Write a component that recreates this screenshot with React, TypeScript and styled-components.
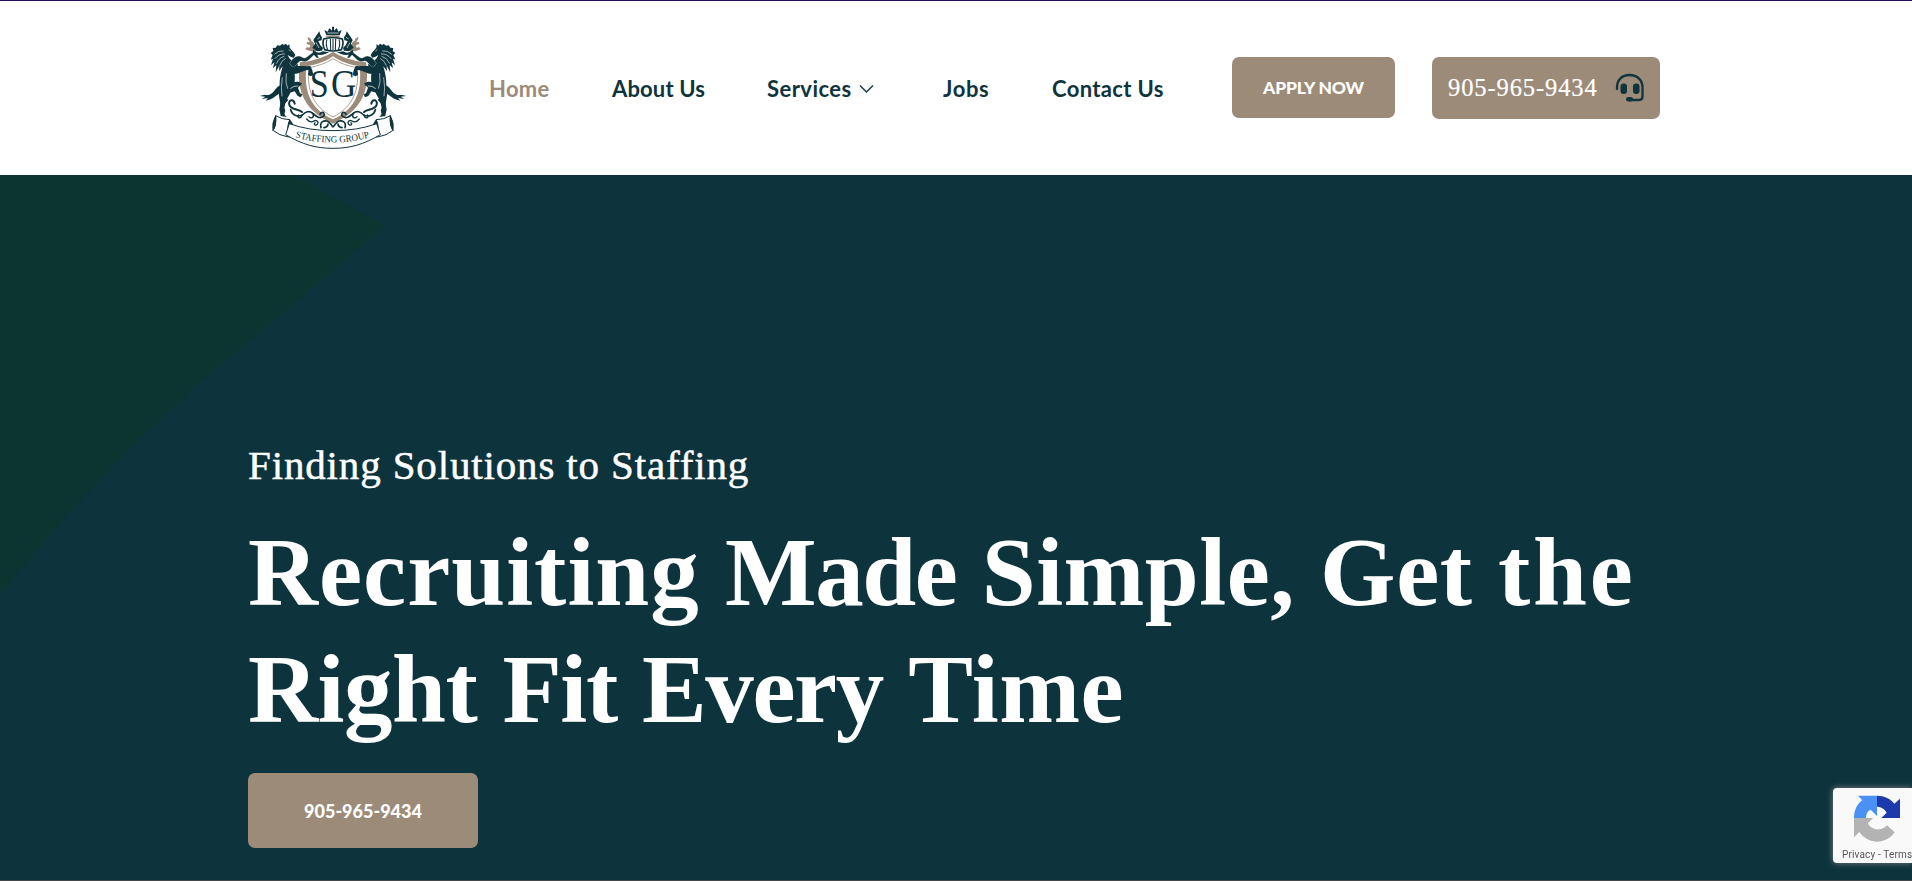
import React from "react";
import styled, { createGlobalStyle } from "styled-components";

const ink = "#0f343d";
const tan = "#9d8b79";
const serif = `"Liberation Serif", "Times New Roman", serif`;
const sans = `Lato, "Open Sans", sans-serif`;

const GlobalStyle = createGlobalStyle`
  * { box-sizing: border-box; }
  body { margin: 0; overflow: hidden; background: ${ink}; }
  a { color: inherit; text-decoration: none; }
`;

const Page = styled.div`
  display: flex;
  flex-direction: column;
  width: 100%;
  height: 881px;
  border-top: 1px solid #2b0d55;
  border-bottom: 1px solid #43474a;
  background: #0d333c;
  overflow: hidden;
`;

const Header = styled.header`
  display: flex;
  align-items: flex-start;
  flex: none;
  height: 174px;
  padding-left: 250px;
  background: #fff;
`;

const LogoLink = styled.a`
  display: block;
  width: 165px;
  height: 145px;
  margin: 14px 74px 0 0;
`;

const Nav = styled.nav`
  display: flex;
  width: 743px;
  padding-top: 72px;
`;

const NavItem = styled.a<{ $space: number; $spacing?: number; $active?: boolean }>`
  display: flex;
  align-items: center;
  gap: 7px;
  width: ${(p) => p.$space}px;
  height: 32px;
  color: ${(p) => (p.$active ? tan : ink)};
  font: 700 22px/32px ${sans};
  letter-spacing: ${(p) => p.$spacing ?? 0}px;
  white-space: nowrap;
`;

const Button = styled.a<{ $w: number; $h: number; $size: number; $spacing: number }>`
  display: flex;
  align-items: center;
  justify-content: center;
  width: ${(p) => p.$w}px;
  height: ${(p) => p.$h}px;
  border-radius: 7px;
  background: ${tan};
  color: #fff;
  font: 900 ${(p) => p.$size}px/1 ${sans};
  letter-spacing: ${(p) => p.$spacing}px;
  white-space: nowrap;
`;

const Actions = styled.div`
  display: flex;
  gap: 37px;
  padding-top: 56px;
`;

const PhoneButton = styled.a`
  display: flex;
  align-items: center;
  justify-content: space-between;
  width: 228px;
  height: 62px;
  padding: 0 15px 0 16px;
  border-radius: 7px;
  background: ${tan};
  color: #fff;
  font: 400 24.5px/1 ${serif};
  letter-spacing: 0.9px;
  -webkit-text-stroke: 0.2px #fff;
  white-space: nowrap;
`;

const Hero = styled.main`
  position: relative;
  flex: 1;
  padding: 260px 0 0 248px;
`;

const HeroShape = styled.svg`
  position: absolute;
  left: 0;
  top: 0;
`;

const HeroContent = styled.div`
  position: relative;
  color: #fff;
`;

const Tagline = styled.p`
  margin: 0 0 19px;
  font: 400 41px/60px ${serif};
  letter-spacing: 0.85px;
  -webkit-text-stroke: 0.5px #fff;
  white-space: nowrap;
`;

const Title = styled.h1`
  margin: 0 0 25px;
  font: 700 97px/117px ${serif};
  letter-spacing: 1px;
  white-space: nowrap;
`;

const TitleLine = styled.span`
  display: block;
`;

const Word = styled.span<{ $spacing: number }>`
  letter-spacing: ${(p) => p.$spacing}px;
`;

const Captcha = styled.aside`
  position: fixed;
  right: 0;
  bottom: 18px;
  display: flex;
  flex-direction: column;
  width: 79px;
  height: 75px;
  padding: 6px 0 0 9px;
  border-radius: 4px 0 0 4px;
  background: #f9f9f9;
  box-shadow: 0 0 6px #808080;
  color: #555;
  font: 400 10px/14px Roboto, sans-serif;
  white-space: nowrap;
  overflow: hidden;
  svg { margin-left: 10px; flex: none; }
`;

const CaptchaLinks = styled.div`
  margin-top: 4px;
  letter-spacing: 0.15px;
`;

/* Left half of the crest: supporter horse, scrollwork, ribbon end, crown flourish. */
function CrestHalf() {
  return (
    <g>
      {/* shield frame */}
      <path d="M249 110 C226 126 190 138 150 142 C138 222 158 285 249 326 L249 313 C177 281 162 225 169 154 C200 149 228 139 249 124Z" fill={tan} />
      <path d="M249 131 C226 146 204 153 177 158 C170 222 186 274 249 306" fill="none" stroke={tan} strokeWidth="2.5" />
      {/* head, neck and body */}
      <path d="M108 86 L113 92 L118 87 L119 98 L132 113 L136 121 L131 128 L123 126 L113 120 C119 136 132 141 145 149 L132 167 C137 186 135 211 126 220 L119 238 L113 248 L108 257 L102 275 L106 287 L103 298 L110 306 L92 303 L91 293 L95 278 L90 260 L86 236 L89 216 C88 188 94 169 98 154 L87 168 L88 152 L77 172 L79 150 L69 160 L73 142 L63 151 L69 131 L62 134 L68 120 L62 114 L70 108 L68 99 L77 98 L82 91 L90 92 L97 86 L101 90Z" fill={ink} />
      <g fill="none" stroke="#fff" strokeWidth="1.8">
        <path d="M73 118 Q86 105 101 108" />
        <path d="M74 132 Q87 115 105 117" />
        <path d="M79 146 Q88 127 103 124" />
        <path d="M89 152 Q94 137 107 130" />
        <path d="M109 175 Q105 204 113 221" />
        <path d="M97 187 Q92 219 96 244" />
        <path d="M116 104 L122 108" />
      </g>
      {/* forelegs */}
      <path d="M119 145 C130 126 143 119 155 126 C168 136 176 119 190 112 L201 116 L207 130 L199 128 L192 120 C180 130 172 144 157 139 C146 134 143 151 128 157Z" fill={ink} stroke="#fff" strokeWidth="1" />
      <path d="M124 158 C145 149 160 155 181 153 L187 166 L190 180 L181 184 L174 179 L176 165 C157 166 149 177 131 177Z" fill={ink} />
      {/* tail and hind legs */}
      <path d="M91 211 C78 214 73 235 58 239 C49 241 42 238 30 243 L46 245 L35 252 L54 249 L47 257 C70 253 80 241 91 232Z" fill={ink} />
      <path d="M119 207 C132 198 146 198 156 206 L144 218 L150 235 L157 238 L153 247 L143 243 L134 229 L117 234Z" fill={ink} />
      <path d="M93 250 Q109 246 115 254 L106 265 L100 290 L104 300 L94 304 L88 285Z" fill={ink} />
      <path d="M121 221 Q131 211 145 213" fill="none" stroke="#fff" strokeWidth="2" />
      {/* scrolls */}
      <g fill="none" stroke={ink} strokeLinecap="round">
        <path d="M134 266 C132 250 114 254 118 269 C122 285 144 281 156 291" strokeWidth="6" />
        <path d="M122 284 C126 299 142 308 157 300 C166 290 178 286 188 295" strokeWidth="5" />
        <path d="M157 300 C151 315 139 307 146 300 M188 295 C195 306 184 313 177 305" strokeWidth="4" />
        <path d="M188 295 C199 304 208 313 220 304 C229 295 215 286 210 298" strokeWidth="5" />
        <path d="M170 312 Q180 325 192 318 C202 312 209 325 199 330 C193 332 191 326 195 323" strokeWidth="4" />
        <path d="M213 338 C208 320 222 316 231 318 C240 320 243 332 249 335 M222 338 Q234 336 234 327" strokeWidth="5" />
      </g>
      {/* ribbon end */}
      <g fill="#fff" stroke={ink} strokeWidth="3" strokeLinejoin="round">
        <path d="M77 302 Q96 314 119 314 L115 366 Q88 362 69 346 Q80 330 77 302Z" />
        <path d="M119 314 Q108 341 117 367 Q130 360 131 346 L127 326Z" fill={ink} />
        <path d="M77 302 Q65 324 69 346 Q78 337 77 302Z" fill={ink} />
      </g>
      {/* crown flourish and small beast */}
      <path d="M172 67 Q183 67 184 78 Q192 80 193 90 L201 98 L197 110 L180 108 L166 103 Q167 94 178 98 L181 91 L170 87 L171 81 L180 82 Q174 76 172 67Z" fill={tan} />
      <path d="M208 49 L211 59 L216 67 L215 76 L205 78 L211 91 L219 99 L216 107 L201 109 L187 98 L195 86 L190 75 L198 63Z" fill={ink} />
      <path d="M190 104 Q204 119 218 109 L237 112 L225 117 Q204 124 188 113Z" fill={ink} />
      <path d="M202 72 L210 67 M198 82 L207 99" stroke="#fff" strokeWidth="2" />
    </g>
  );
}

function Crest() {
  return (
    <svg width="165" height="145" viewBox="0 0 495 435" role="img" aria-label="SG Staffing Group">
      <CrestHalf />
      <g transform="translate(498 0) scale(-1 1)">
        <CrestHalf />
      </g>
      <path d="M221 72 Q249 62 277 72 Q282 88 274 104 Q249 112 224 104 Q216 88 221 72Z" fill="#fff" stroke={ink} strokeWidth="5" />
      <path d="M231 73 Q226 88 233 104 M241 71 L242 106 M249 71 V106 M257 71 L256 106 M267 73 Q272 88 265 104" fill="none" stroke={ink} strokeWidth="3.2" />
      <path d="M229 61 L223 45 L233 50 L238 39 L246 47 V35 H252 V47 L260 39 L265 50 L275 45 L269 61Z" fill={ink} />
      <path d="M232 54 H266" stroke="#fff" strokeWidth="2" />
      <path d="M229 66 Q249 60 269 66" fill="none" stroke={tan} strokeWidth="5" />
      <path d="M118 326 Q175 347 249 347 Q323 347 380 326 L391 359 C340 389 300 400 249 400 C198 400 158 389 107 359Z" fill="#fff" stroke={ink} strokeWidth="3" />
      <path id="ribbonText" d="M136 367 Q249 399 364 366" fill="none" />
      <g fill={ink} fontFamily="Liberation Serif">
        <text x="179" y="247" fontSize="120" textLength="57" lengthAdjust="spacingAndGlyphs">S</text>
        <text x="243" y="247" fontSize="120" textLength="76" lengthAdjust="spacingAndGlyphs">G</text>
        <text fontSize="29">
          <textPath href="#ribbonText" textLength="226" lengthAdjust="spacingAndGlyphs">STAFFING GROUP</textPath>
        </text>
      </g>
    </svg>
  );
}

const Chevron = () => (
  <svg width="15" height="10" viewBox="0 0 15 10" fill="none">
    <path d="M1 1.5 L7.5 8 L14 1.5" stroke={ink} strokeWidth="1.3" />
  </svg>
);

const Headset = () => (
  <svg width="30" height="30" viewBox="0 0 30 30" fill="none">
    <path d="M2 16 V14.5 C2 7 7 2 14.5 2 S27.5 7 27.5 14.5 V23.5 Q27.5 27 24 27 H14" stroke={ink} strokeWidth="2.3" strokeLinecap="round" />
    <rect x="5.5" y="10.5" width="6.5" height="10.5" rx="3" fill={ink} />
    <rect x="18" y="10.5" width="6.5" height="10.5" rx="3" fill={ink} />
    <rect x="11" y="24" width="7" height="4.4" rx="2.2" fill={ink} />
  </svg>
);

const CaptchaMark = () => (
  <svg width="50" height="50" viewBox="0 0 150 150">
    <path d="M75 5 C97 5 116 14 127 29 L144 14 V72 H88 L104 56 C98 45 88 38 75 38Z" fill="#1c3aa9" />
    <path d="M75 5 H18 L31 19 C15 30 6 49 6 72 H42 C42 58 48 50 56 47 L75 66Z" fill="#4a90f5" />
    <path d="M6 72 H63 L48 88 C57 110 91 112 105 94 L128 115 C100 154 48 151 22 114 L6 130Z" fill="#b3b3b3" />
  </svg>
);

export default function App() {
  return (
    <Page>
      <GlobalStyle />
      <Header>
        <LogoLink href="#"><Crest /></LogoLink>
        <Nav>
          <NavItem href="#" $space={123} $spacing={0.3} $active>Home</NavItem>
          <NavItem href="#" $space={155} $spacing={0.15}>About Us</NavItem>
          <NavItem href="#" $space={176} $spacing={0.45}>Services <Chevron /></NavItem>
          <NavItem href="#" $space={109} $spacing={0.6}>Jobs</NavItem>
          <NavItem href="#" $space={180} $spacing={0.35}>Contact Us</NavItem>
        </Nav>
        <Actions>
          <Button href="#" $w={163} $h={61} $size={17.5} $spacing={-0.2}>APPLY NOW</Button>
          <PhoneButton href="#">905-965-9434 <Headset /></PhoneButton>
        </Actions>
      </Header>
      <Hero>
        <HeroShape width="400" height="430" viewBox="0 0 400 430">
          <path d="M0 0 H294 L385 51 L277 143 L213 196 Q95 300 0 420Z" fill="#0c3430" />
        </HeroShape>
        <HeroContent>
          <Tagline>Finding Solutions to Staffing</Tagline>
          <Title>
            <TitleLine>
              <Word $spacing={1}>Recruiting</Word> <Word $spacing={-1.4}>Made</Word>{" "}
              <Word $spacing={0.45}>Simple,</Word> <Word $spacing={0.6}>Get</Word>{" "}
              <Word $spacing={2.8}>the</Word>
            </TitleLine>
            <TitleLine>
              <Word $spacing={-0.5}>Right</Word> <Word $spacing={-1.4}>Fit</Word>{" "}
              <Word $spacing={-1.4}>Every</Word> <Word $spacing={0.6}>Time</Word>
            </TitleLine>
          </Title>
          <Button href="#" $w={230} $h={75} $size={18} $spacing={0}>905-965-9434</Button>
        </HeroContent>
      </Hero>
      <Captcha>
        <CaptchaMark />
        <CaptchaLinks>Privacy - Terms</CaptchaLinks>
      </Captcha>
    </Page>
  );
}
